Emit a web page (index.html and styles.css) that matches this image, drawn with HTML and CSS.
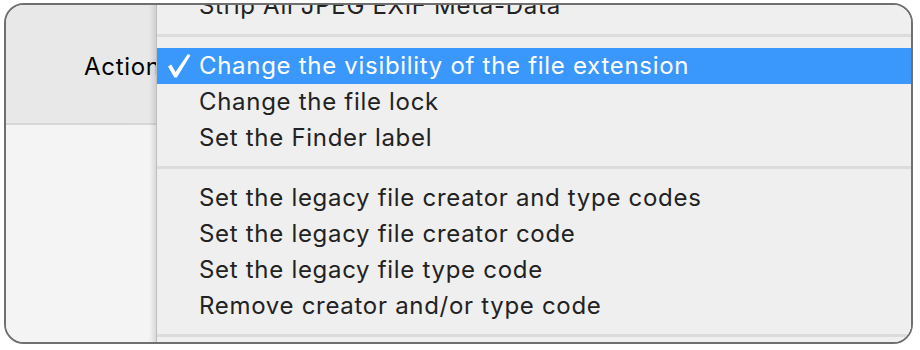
FILE: index.html
```html
<!DOCTYPE html>
<html lang="en">
<head>
    <meta charset="UTF-8">
    <meta name="viewport" content="width=device-width, initial-scale=1.0">
    <title>Action menu</title>
    <link rel="stylesheet" href="styles.css">
</head>
<body>
    <div class="window">
        <div class="toolbar">
            <span class="label">Action</span>
        </div>
        <div class="pane"></div>

        <div class="menu">
            <div class="item">Strip All JPEG EXIF Meta-Data</div>
            <div class="sep"></div>
            <div class="item selected">
                <svg class="check" width="24" height="26" viewBox="0 0 24 26">
                    <path d="M1 13.5 L4.2 11.5 L8.6 19 L20.8 1 L23.5 2.2 L9.8 24.5 L7.4 24.5 Z" fill="#ffffff"/>
                </svg>Change the visibility of the file extension</div>
            <div class="item">Change the file lock</div>
            <div class="item">Set the Finder label</div>
            <div class="sep"></div>
            <div class="item">Set the legacy file creator and type codes</div>
            <div class="item">Set the legacy file creator code</div>
            <div class="item">Set the legacy file type code</div>
            <div class="item">Remove creator and/or type code</div>
            <div class="sep"></div>
        </div>
    </div>
</body>
</html>
```

FILE: styles.css
```css
body {
    margin: 0;
    background-color: #ffffff;
    font-family: Inter, "Liberation Sans", sans-serif;
}

.window {
    position: relative;
    box-sizing: border-box;
    width: 909px;
    height: 341px;
    margin: 3px 0 0 4px;
    border: 2px solid #6f6f6f;
    border-radius: 20px;
    overflow: hidden;
    background-color: #f5f5f5;
}

.toolbar {
    display: flex;
    align-items: center;
    height: 118px;
    padding-left: 78px;
    background-color: #e8e8e8;
    border-bottom: 2px solid #d6d6d6;
}

.label {
    font-size: 24px;
    letter-spacing: 0.7px;
    color: #000000;
    margin-top: 4px;
}

.pane {
    height: 100%;
    background: linear-gradient(to right, #f4f4f4, #f6f6f6);
}

.menu {
    position: absolute;
    top: -17px;
    left: 150px;
    width: 800px;
    background-color: #efefef;
    border-left: 1px solid #bdbdbd;
    box-shadow: -3px 0 5px rgba(0, 0, 0, 0.12);
}

.item {
    height: 36px;
    line-height: 36px;
    padding-left: 42px;
    font-size: 24px;
    letter-spacing: 0.7px;
    color: #222222;
    white-space: nowrap;
    position: relative;
}

.item.selected {
    background-color: #3a97fc;
    color: #ffffff;
}

.check {
    position: absolute;
    left: 10px;
    top: 5px;
}

.sep {
    height: 24px;
    background: linear-gradient(#efefef 10px, #dcdcdc 10px, #dcdcdc 13px, #efefef 13px);
}
```
